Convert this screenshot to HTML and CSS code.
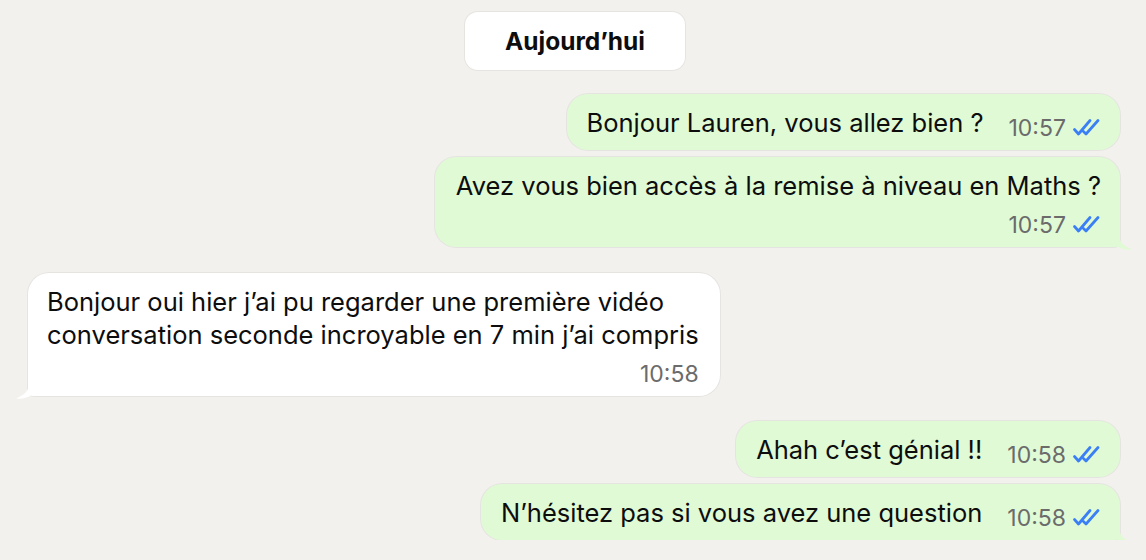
FILE: index.html
```html
<!DOCTYPE html>
<html lang="fr">
<head>
  <meta charset="UTF-8">
  <meta name="viewport" content="width=device-width, initial-scale=1">
  <title>Conversation</title>
  <link rel="stylesheet" href="styles.css">
</head>
<body>
  <!-- Conversation thread -->
  <main class="chat">

    <!-- Day separator -->
    <div class="day">Aujourd’hui</div>

    <!-- Outgoing: first group -->
    <div class="group">
      <div class="bubble out inline">
        <span class="text">Bonjour Lauren, vous allez bien ?</span>
        <span class="meta">10:57 <svg class="ticks" viewBox="0 0 28 19"><path d="M1.5 11.5 L5.5 16 L17 2.5 M10.5 13.5 L13 16 L25 2.5"/></svg></span>
      </div>
      <div class="bubble out stacked tail">
        <span class="text">Avez vous bien accès à la remise à niveau en Maths ?</span>
        <span class="meta">10:57 <svg class="ticks" viewBox="0 0 28 19"><path d="M1.5 11.5 L5.5 16 L17 2.5 M10.5 13.5 L13 16 L25 2.5"/></svg></span>
        <svg class="tail-shape" viewBox="0 0 22 26"><path d="M0 0 H8 V11 C8 17 12 22 21 25.5 C15 26 10 25 6 22.5 C4 23 2 23 0 23 Z"/></svg>
      </div>
    </div>

    <!-- Incoming -->
    <div class="group">
      <div class="bubble in stacked tail">
        <span class="text">Bonjour oui hier j’ai pu regarder une première vidéo<br>conversation seconde incroyable en 7 min j’ai compris</span>
        <span class="meta">10:58</span>
        <svg class="tail-shape" viewBox="0 0 22 26"><path d="M22 0 H14 V11 C14 17 10 22 1 25.5 C7 26 12 25 16 22.5 C18 23 20 23 22 23 Z"/></svg>
      </div>
    </div>

    <!-- Outgoing: second group -->
    <div class="group">
      <div class="bubble out inline">
        <span class="text">Ahah c’est génial !!</span>
        <span class="meta">10:58 <svg class="ticks" viewBox="0 0 28 19"><path d="M1.5 11.5 L5.5 16 L17 2.5 M10.5 13.5 L13 16 L25 2.5"/></svg></span>
      </div>
      <div class="bubble out inline tail">
        <span class="text">N’hésitez pas si vous avez une question</span>
        <span class="meta">10:58 <svg class="ticks" viewBox="0 0 28 19"><path d="M1.5 11.5 L5.5 16 L17 2.5 M10.5 13.5 L13 16 L25 2.5"/></svg></span>
        <svg class="tail-shape" viewBox="0 0 22 26"><path d="M0 0 H8 V11 C8 17 12 22 21 25.5 C15 26 10 25 6 22.5 C4 23 2 23 0 23 Z"/></svg>
      </div>
    </div>

  </main>
</body>
</html>
```

FILE: styles.css
```css
/* Page background and base font */
body {
  margin: 0;
  background: #f3f1ed;
  font-family: Inter, "Noto Sans", Arial, sans-serif;
  color: #0d0d0d;
}
/* Thread column */
.chat {
  display: flex;
  flex-direction: column;
  padding: 12px 26px 0 28px;
  gap: 26px;
}
/* "Aujourd'hui" pill */
.day {
  align-self: center;
  width: 220px;
  height: 58px;
  box-sizing: border-box;
  display: flex;
  align-items: center;
  justify-content: center;
  background: #fff;
  border-radius: 13px;
  box-shadow: 0 0 0 1px rgba(0, 0, 0, 0.05);
  font-size: 24.5px;
  font-weight: 700;
  margin-left: 2px;
  margin-bottom: -2px;
}
/* A run of messages from one sender */
.group {
  display: flex;
  flex-direction: column;
  gap: 7px;
}
.group + .group + .group {
  margin-top: -1px;
}
/* Message bubble */
.bubble {
  position: relative;
  border-radius: 21px;
  font-size: 25.5px;
  line-height: 33px;
  box-shadow: 0 0 0 1px rgba(0, 0, 0, 0.05);
}
.bubble.out {
  align-self: flex-end;
  background: #e0fad6;
}
.bubble.in {
  align-self: flex-start;
  background: #fff;
}
/* Text and time on one line */
.bubble.inline {
  display: flex;
  align-items: flex-end;
  padding: 12px 19px 11px 20px;
}
.bubble.inline .meta {
  margin-left: 25px;
  margin-bottom: -3px;
}
/* Time on its own line under the text */
.bubble.stacked {
  display: flex;
  flex-direction: column;
  padding: 12px 19px 8px 21px;
}
.bubble.stacked .meta {
  align-self: flex-end;
  margin-top: 9px;
}
.bubble.in.stacked {
  padding-left: 19px;
  padding-right: 21px;
}
/* Time stamp and read ticks */
.meta {
  display: flex;
  align-items: center;
  font-size: 23px;
  line-height: 28px;
  color: #6b6b6b;
  white-space: nowrap;
}
.ticks {
  width: 28px;
  height: 19px;
  margin-left: 7px;
  margin-top: -2px;
  fill: none;
  stroke: #3a7ff5;
  stroke-width: 2.7;
  stroke-linecap: round;
  stroke-linejoin: round;
}
/* Bubble tails */
.bubble.out.tail {
  border-bottom-right-radius: 6px;
}
.bubble.in.tail {
  border-bottom-left-radius: 6px;
}
.tail-shape {
  position: absolute;
  bottom: -3px;
  width: 22px;
  height: 26px;
}
.out .tail-shape {
  right: -13px;
  fill: #e0fad6;
}
.in .tail-shape {
  left: -13px;
  fill: #fff;
}
```
